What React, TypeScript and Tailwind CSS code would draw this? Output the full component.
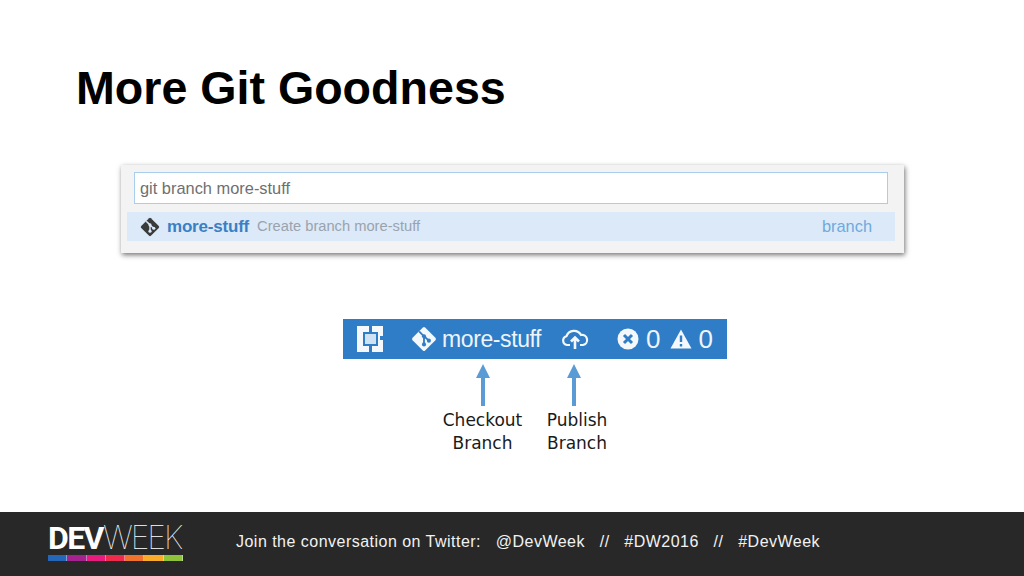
const sans = { fontFamily: '"Liberation Sans", Arial, sans-serif' };

function GitDiamond({ className, fg, cut }: { className: string; fg: string; cut: string }) {
  return (
    <svg viewBox="0 0 24 24" className={className}>
      <rect x="3.8" y="3.8" width="16.4" height="16.4" rx="1.5" transform="rotate(45 12 12)" fill={fg} />
      <path d="M7.5 5 L12 9.5 L12 18 M12 9.5 L17 14" stroke={cut} strokeWidth="1.7" fill="none" />
      <circle cx="12" cy="9.5" r="1.9" fill={cut} />
      <circle cx="12" cy="17" r="1.9" fill={cut} />
      <circle cx="16.5" cy="13.5" r="1.9" fill={cut} />
    </svg>
  );
}

function UpArrow() {
  return (
    <svg viewBox="0 0 16 42" className="w-4 h-[42px]">
      <path d="M8 0 L15 14 L10 14 L10 42 L6 42 L6 14 L1 14 Z" fill="#5b9bd5" />
    </svg>
  );
}

const strip = ['#2566b8', '#a6228f', '#e71c7e', '#ef2b4d', '#f1722c', '#fbab2a', '#8fc43a'];

export default function App() {
  return (
    <div className="w-[1024px] h-[576px] bg-white flex flex-col overflow-hidden" style={sans}>
      <h1 className="ml-[76px] mt-[63px] h-[50px] text-[46.6px] leading-[50px] font-bold text-black">More Git Goodness</h1>

      {/* command palette */}
      <div className="ml-[121px] mt-[52px] w-[783px] h-[88px] bg-[#f3f3f3] shadow-[1px_2px_5px_rgba(0,0,0,0.55)] pt-[7px] pl-[6px] pr-[9px]">
        <div className="ml-[7px] mr-[7px] h-[32px] bg-white border border-[#a9cdec] pl-[5px] flex items-center text-[16.4px] text-[#6f6f6f]">
          git branch more-stuff
        </div>
        <div className="mt-[8px] h-[29px] bg-[#dce9f8] flex items-center pl-[13px] pr-[23px] text-[16.4px]">
          <GitDiamond className="w-[20px] h-[20px] mr-[7px]" fg="#3a3a3a" cut="#dce9f8" />
          <span className="font-bold text-[17px] text-[#3a7fc4] tracking-[-0.2px]">more-stuff</span>
          <span className="ml-[8px] text-[14.7px] text-[#9aa3ad]">Create branch more-stuff</span>
          <span className="ml-auto text-[#6fa9dd]">branch</span>
        </div>
      </div>

      {/* status bar */}
      <div className="ml-[343px] mt-[66px] w-[384px] h-[40px] bg-[#2f7dc6] flex items-center text-white">
        <svg viewBox="0 0 28 28" className="ml-[13px] w-[28px] h-[28px]">
          <rect x="1" y="1" width="26" height="26" fill="#f4f8fb" />
          <path d="M13 1 H16 V7 H13 Z M13 21 H16 V27 H13 Z M24 11 H27 V15 H24 Z" fill="#2f7dc6" />
          <rect x="8" y="8" width="13" height="12" fill="#cfe2f3" stroke="#2f7dc6" strokeWidth="2" />
          <path d="M17 4 H24 V11 M12 24 H5 V17" fill="none" stroke="#2f7dc6" strokeWidth="0" />
        </svg>
        <GitDiamond className="ml-[27px] w-[26px] h-[26px]" fg="#f4f8fb" cut="#2f7dc6" />
        <span className="ml-[5px] text-[23px] tracking-[-0.4px] text-[#eef4fa]">more-stuff</span>
        <svg viewBox="0 0 28 22" className="ml-[20px] w-[28px] h-[22px]" fill="none" stroke="#f4f8fb" strokeWidth="2.2">
          <path d="M9 17 H6 A4.5 4.5 0 0 1 5.5 8.2 A8 8 0 0 1 20 7 A5 5 0 0 1 22 17 H19" />
          <path d="M14 21 V10 M10 13.5 L14 9.5 L18 13.5" strokeWidth="2.6" />
        </svg>
        <svg viewBox="0 0 22 22" className="ml-[28px] w-[22px] h-[22px]">
          <circle cx="11" cy="11" r="10.5" fill="#f4f8fb" />
          <path d="M7 7 L15 15 M15 7 L7 15" stroke="#2f7dc6" strokeWidth="3" />
        </svg>
        <span className="ml-[7px] text-[26px] text-[#eef4fa]">0</span>
        <svg viewBox="0 0 22 20" className="ml-[9px] w-[22px] h-[20px]">
          <path d="M11 0.5 L21.5 19.5 H0.5 Z" fill="#f4f8fb" />
          <path d="M11 6.5 V13 M11 15 V17.5" stroke="#2f7dc6" strokeWidth="2.4" />
        </svg>
        <span className="ml-[7px] text-[26px] text-[#eef4fa]">0</span>
      </div>

      {/* callouts */}
      <div className="ml-[442px] mt-[5px] flex text-[17px] leading-[23px] text-[#1a1a1a] text-center" style={{ fontFamily: '"DejaVu Sans", sans-serif' }}>
        <div className="w-[81px] flex flex-col items-center">
          <UpArrow />
          <span className="mt-[3px]">Checkout</span>
          <span>Branch</span>
        </div>
        <div className="ml-[24px] w-[60px] flex flex-col items-center">
          <div className="mr-[7px] h-[42px] flex">
            <UpArrow />
          </div>
          <span className="mt-[3px]">Publish</span>
          <span>Branch</span>
        </div>
      </div>

      {/* footer */}
      <div className="mt-auto h-[64px] bg-[#282828] flex items-start text-[#f2f2f2]">
        <div className="ml-[48px] mt-[12px] w-[135px]">
          <div className="h-[28px] flex items-center text-[32px] leading-[28px] text-white">
            <span className="font-bold tracking-[-1.6px]" style={{ fontFamily: 'Roboto, sans-serif' }}>DEV</span>
            <span className="font-thin tracking-[-2px]" style={{ fontFamily: 'Inter, sans-serif' }}>WEEK</span>
          </div>
          <div className="mt-[3px] flex h-[6px]">
            {strip.map((c) => (
              <div key={c} className="flex-1 border-r border-white/40" style={{ background: c }} />
            ))}
          </div>
        </div>
        <div className="ml-[53px] mt-[20px] text-[16px] leading-[20px] whitespace-pre tracking-[0.48px]">
          {'Join the conversation on Twitter:   @DevWeek   //   #DW2016   //   #DevWeek'}
        </div>
      </div>
    </div>
  );
}
